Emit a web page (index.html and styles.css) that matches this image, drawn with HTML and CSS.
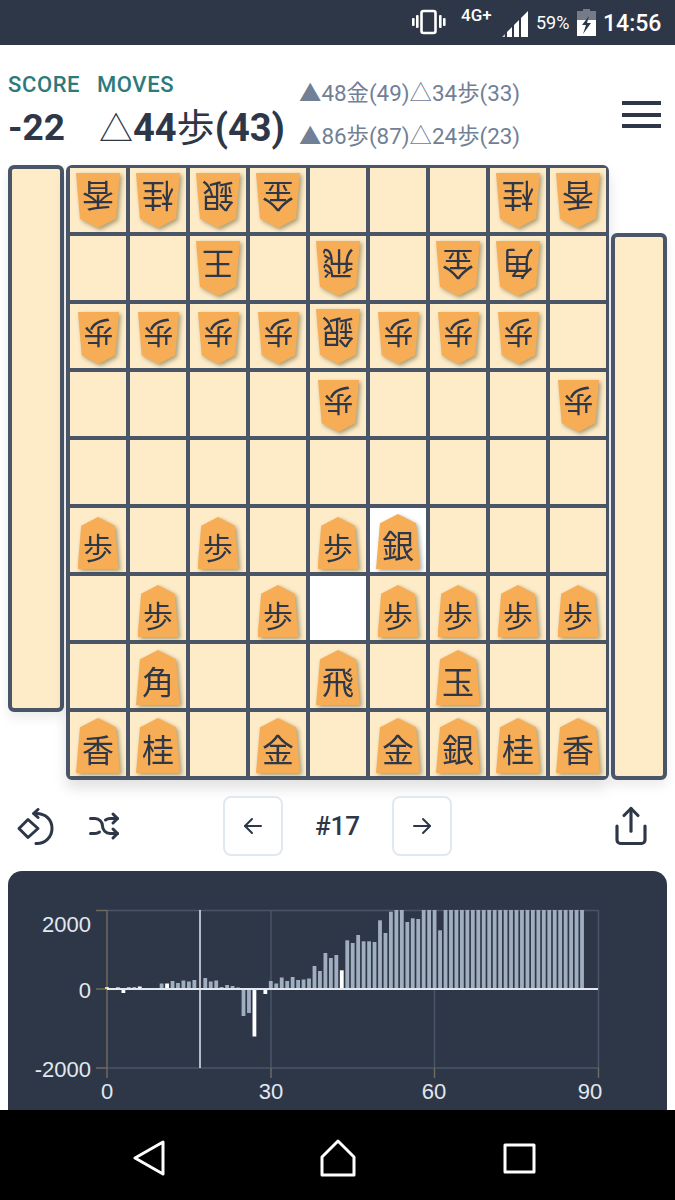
FILE: index.html
```html
<!DOCTYPE html>
<html lang="ja">
<head>
  <meta charset="UTF-8" />
  <meta name="viewport" content="width=device-width, initial-scale=1.0"/>
  <title>Shogi Replay</title>
  <link rel="stylesheet" href="styles.css">
</head>
<body>

<div class="status-bar">
  <svg class="icon-vibrate" width="36" height="26" viewBox="0 0 36 26">
    <rect x="10.5" y="2" width="14" height="22" rx="2" fill="none" stroke="#fff" stroke-width="2.6"/>
    <rect x="5" y="6" width="2.6" height="13" rx="1" fill="#fff"/>
    <rect x="1" y="9" width="2.6" height="8" rx="1" fill="#fff"/>
    <rect x="28" y="6" width="2.6" height="13" rx="1" fill="#fff"/>
    <rect x="32" y="9" width="2.6" height="8" rx="1" fill="#fff"/>
  </svg>
  <span class="net-type">4G+</span>
  <svg class="icon-signal" width="26" height="27" viewBox="0 0 26 27">
    <polygon points="0,27 3,24 3,27" fill="#fff" opacity=".7"/>
    <polygon points="5,27 5,22 10,17 10,27" fill="#fff"/>
    <polygon points="12,27 12,15 17,10 17,27" fill="#fff"/>
    <polygon points="19,27 19,8 26,1 26,27" fill="#fff"/>
  </svg>
  <span class="battery-pct">59%</span>
  <svg class="icon-battery" width="19" height="27" viewBox="0 0 19 27">
    <path d="M6 0h7v2h6v10H0V2h6z" fill="#fff" opacity=".35"/>
    <path d="M0 11h19v16H0z" fill="#fff"/>
    <path d="M12 7 L5 16 H9 L6 25 L14 14 H10 Z" fill="#2d3748"/>
  </svg>
  <span class="clock">14:56</span>
</div>

<header class="game-header">
  <div class="score-box">
    <div class="label">SCORE</div>
    <div class="value">-22</div>
  </div>
  <div class="move-box">
    <div class="label">MOVES</div>
    <div class="value"><span class="side">△</span>44<span class="thin">歩</span>(43)</div>
  </div>
  <div class="next-moves">
    <div>▲48金(49)△34歩(33)</div>
    <div>▲86歩(87)△24歩(23)</div>
  </div>
  <button class="menu-btn" type="button"><span></span><span></span><span></span></button>
</header>

<section class="board-area">
  <div class="stand stand-top"></div>
  <div class="board" id="board"></div>
  <div class="stand stand-bottom"></div>
</section>

<div class="controls">
  <svg class="tool-rotate" width="40" height="40" viewBox="0 0 40 40" fill="none" stroke="#2d3748" stroke-width="3" stroke-linejoin="round" stroke-linecap="round">
    <path d="M12 11.500 L22 20.500 L12 29.500 L3 20.500 Z"/>
    <path d="M19 5.500 C30 5 36 12 36 20.500 C36 29 29 36 20 35.500"/>
    <path d="M22 1.500 L17.500 5.500 L22 9.500"/>
  </svg>
  <svg class="tool-shuffle" width="36" height="36" viewBox="0 0 24 24" fill="none" stroke="#2d3748" stroke-width="2" stroke-linejoin="round" stroke-linecap="round">
    <path d="M18 4l3 3l-3 3"/>
    <path d="M18 20l3 -3l-3 -3"/>
    <path d="M3 7h3a5 5 0 0 1 5 5a5 5 0 0 0 5 5h5"/>
    <path d="M21 7h-5a4.978 4.978 0 0 0 -3 1m-4 8a4.984 4.984 0 0 1 -3 1h-3"/>
  </svg>
  <div class="pager">
    <button class="page-btn" type="button">
      <svg width="24" height="24" viewBox="0 0 24 24" fill="none" stroke="#2d3748" stroke-width="2" stroke-linecap="round" stroke-linejoin="round"><path d="M20 12H4"/><path d="M11 5l-7 7 7 7"/></svg>
    </button>
    <span class="move-no">#17</span>
    <button class="page-btn" type="button">
      <svg width="24" height="24" viewBox="0 0 24 24" fill="none" stroke="#2d3748" stroke-width="2" stroke-linecap="round" stroke-linejoin="round"><path d="M4 12h16"/><path d="M13 5l7 7-7 7"/></svg>
    </button>
  </div>
  <svg class="tool-share" width="42" height="42" viewBox="0 0 24 24" fill="none" stroke="#2d3748" stroke-width="1.800" stroke-linecap="round" stroke-linejoin="round">
    <path d="M4 12v8a2 2 0 0 0 2 2h12a2 2 0 0 0 2-2v-8"/>
    <path d="M8 6l4-4 4 4"/>
    <path d="M12 2v13"/>
  </svg>
</div>

<section class="chart-panel">
  <svg id="chart" width="659" height="239" viewBox="8 871 659 239">
    <g class="grid">
      <path d="M107 910.500H598.500M107 1068H598.500M271 910V1068M434.500 910V1068M598.500 910V1068"/>
    </g>
    <g class="ticks">
      <path d="M107 910V1078M96 910.500H107M96 1068H107M96 989H107"/>
      <path d="M271 1068V1078M434.500 1068V1078M598.500 1068V1078"/>
    </g>
    <g id="bars"></g>
    <path class="zero-line" d="M107 989H598"/>
    <path class="cursor-line" d="M200 910V1068"/>
    <g class="y-labels">
      <text x="91" y="932">2000</text>
      <text x="91" y="998">0</text>
      <text x="91" y="1077">-2000</text>
    </g>
    <g class="x-labels">
      <text x="107" y="1099">0</text>
      <text x="271" y="1099">30</text>
      <text x="434" y="1099">60</text>
      <text x="590" y="1099">90</text>
    </g>
  </svg>
</section>

<nav class="nav-bar">
  <svg width="33" height="36" viewBox="0 0 33 36" fill="none" stroke="#fff" stroke-width="3" stroke-linejoin="round"><path d="M30 2V34L2 18Z"/></svg>
  <svg class="nav-home" width="38" height="38" viewBox="0 0 38 38" fill="none" stroke="#fff" stroke-width="3" stroke-linejoin="round"><path d="M19 2L35 18V36H3V18Z"/></svg>
  <svg class="nav-recent" width="33" height="31" viewBox="0 0 33 31" fill="none" stroke="#fff" stroke-width="3" stroke-linejoin="round"><path d="M2 2H31V29H2Z"/></svg>
</nav>

<script src="script.js"></script>
</body>
</html>
```

FILE: styles.css
```css
* { box-sizing: border-box; margin: 0; padding: 0; }

html, body {
  height: 1200px;
  overflow: hidden;
}

body {
  font-family: Roboto, 'Noto Sans CJK JP', sans-serif;
  background: #fff;
  color: #2d3748;
  display: flex;
  flex-direction: column;
}

/* android status bar */
.status-bar {
  height: 45px;
  flex: none;
  background: #2d3748;
  color: #fff;
  display: flex;
  align-items: flex-start;
  padding-left: 411px;
}

.icon-vibrate { margin-top: 9px; }
.net-type {
  font-size: 17px;
  font-weight: 500;
  line-height: 18px;
  margin: 6px 0 0 14px;
  width: 41px;
}
.icon-signal { margin-top: 10px; }
.battery-pct {
  font-size: 18px;
  line-height: 22px;
  margin: 12px 0 0 8px;
  width: 40px;
}
.icon-battery { margin: 9px 0 0 1px; }
.clock {
  font-size: 23px;
  font-weight: 500;
  line-height: 26px;
  margin: 11px 0 0 7px;
}

/* score and moves */
.game-header {
  height: 120px;
  flex: none;
  display: flex;
  padding: 28px 14px 0 8px;
}

.label {
  font-size: 22px;
  font-weight: 500;
  line-height: 24px;
  color: #2c7a7b;
  letter-spacing: .6px;
}

.value {
  font-size: 37px;
  font-weight: 700;
  line-height: 44px;
  margin-top: 9px;
  white-space: nowrap;
}

.value .thin { font-weight: 400; }

.value .side {
  font-weight: 400;
  font-size: 34px;
  margin-left: 2px;
}

.score-box { width: 89px; }
.move-box { width: 203px; }
.move-box .value { font-size: 38px; }

.next-moves {
  flex: 1;
  margin: -1px 0 0 -1px;
  font-size: 22.4px;
  line-height: 43px;
  color: #718096;
  white-space: nowrap;
}

.menu-btn {
  width: 39px;
  margin-top: 28px;
  height: 27px;
  border: none;
  background: none;
  display: flex;
  flex-direction: column;
  justify-content: space-between;
}

.menu-btn span {
  display: block;
  height: 4px;
  background: #2d3748;
}

/* board */
.board-area {
  height: 615px;
  flex: none;
  display: flex;
  gap: 2px;
  padding-left: 8px;
}

.stand {
  width: 56px;
  height: 547px;
  background: #feebc8;
  border: 4px solid #4a5568;
  border-radius: 6px;
  box-shadow: 0 6px 12px rgba(0, 0, 0, 0.08);
}

.stand-bottom { align-self: flex-end; }

.board {
  width: 543px;
  height: 615px;
  display: grid;
  grid-template-columns: repeat(9, 56px);
  grid-template-rows: repeat(9, 64px);
  gap: 4px;
  background: #4a5568;
  border-style: solid;
  border-color: #4a5568;
  border-width: 3px 3px 4px 4px;
  border-radius: 6px;
  box-shadow: 0 8px 14px rgba(0, 0, 0, 0.12);
}

.cell {
  background: #feebc8;
  display: flex;
  justify-content: center;
  align-items: flex-end;
  padding-bottom: 3px;
}

.cell.flipped {
  align-items: flex-start;
  padding: 5px 0 0;
}

.cell.flipped:has(.small) { padding-top: 8px; }

.cell.last { background: #fff; }

.piece {
  position: relative;
  width: 44px;
  height: 55px;
  font-size: 32px;
  line-height: 1;
  display: flex;
  align-items: center;
  justify-content: center;
  padding-top: 4px;
  font-family: 'Noto Sans CJK JP', sans-serif;
  filter: drop-shadow(2px 2px 2px rgba(60, 60, 20, 0.45));
}

/* the piece outline sits under the character */
.piece::before {
  content: "";
  position: absolute;
  inset: 0;
  z-index: -1;
  background: #f6ad55;
  clip-path: polygon(50% 0, 91% 17%, 100% 100%, 0 100%, 9% 17%);
}

.piece.small {
  width: 41px;
  height: 52px;
  font-size: 30px;
  padding-top: 5px;
}

.cell.flipped .piece {
  transform: rotate(180deg);
  filter: drop-shadow(-2px -2px 2px rgba(60, 60, 20, 0.45));
}

/* tools under the board */
.controls {
  height: 91px;
  flex: none;
  display: flex;
  align-items: flex-start;
  padding: 16px 23px 0 16px;
}

.tool-rotate { margin: 12px 0 0 0; }
.tool-shuffle { margin: 12px 0 0 30px; }

.pager {
  display: flex;
  align-items: center;
  margin-left: 101px;
}

.page-btn {
  width: 60px;
  height: 60px;
  background: #fff;
  border: 2px solid #e2e8f0;
  border-radius: 8px;
  display: flex;
  align-items: center;
  justify-content: center;
}

.move-no {
  width: 109px;
  text-align: center;
  font-size: 26px;
  font-weight: 500;
}

.tool-share { margin: 9px 0 0 auto; }

.chart-panel {
  flex: 1;
  margin: 0 8px;
  background: #2d3748;
  border-radius: 14px 14px 0 0;
  overflow: hidden;
}

#chart { display: block; }

.grid path {
  fill: none;
  stroke: #4a5568;
  stroke-width: 1.5;
}

.ticks path {
  fill: none;
  stroke: #6e6a5e;
  stroke-width: 1.5;
}

.zero-line {
  stroke: #e2e8f0;
  stroke-width: 2;
}

.cursor-line {
  stroke: #e2e8f0;
  stroke-width: 1.5;
}

.y-labels text,
.x-labels text {
  font-family: 'Liberation Sans', sans-serif;
  font-size: 22px;
  fill: #e2e8f0;
}

.y-labels text { text-anchor: end; }
.x-labels text { text-anchor: middle; }

.nav-bar {
  height: 90px;
  flex: none;
  background: #000;
  display: flex;
  align-items: center;
  padding: 6px 0 0 133px;
}

.nav-home { margin-left: 153px; }
.nav-recent { margin-left: 146px; }
```

FILE: script.js
```js
// top row first, "." is an empty square, lower case pieces belong to gote (upside down)
const position = [
  'lnsg...nl',
  '..k.r.gb.',
  'ppppsppp.',
  '....p...p',
  '.........',
  'P.P.PS...',
  '.P.P.PPPP',
  '.B..R.K..',
  'LN.G.GSNL'
];

const names = {
  l: '香', n: '桂', s: '銀', g: '金', k: '王', r: '飛', b: '角', p: '歩',
  L: '香', N: '桂', S: '銀', G: '金', K: '玉', R: '飛', B: '角', P: '歩'
};

const board = document.getElementById('board');

position.forEach((row, y) => {
  [...row].forEach((code, x) => {
    const cell = document.createElement('div');
    cell.className = 'cell';
    if ((y === 5 && x === 5) || (y === 6 && x === 4)) cell.classList.add('last');
    if (code !== '.') {
      const piece = document.createElement('div');
      piece.className = 'piece';
      piece.textContent = names[code];
      if (code === 'p' || code === 'P') piece.classList.add('small');
      if (code === code.toLowerCase()) cell.classList.add('flipped');
      cell.appendChild(piece);
    }
    board.appendChild(cell);
  });
});

// bar heights in px above (or below) the zero line
const evals = [
  2, 0, 2, -4, 2, 2, 2.5, 1, .5, .5, 5.5, 5.5, 8, 6, 8.5, 7.5, 9, 0,
  11, 7.5, 8.5, 2, 4, 3, 1.5, -27, -24, -47.5, 1, -5,
  8, 5.5, 11.5, 8, 12, 9, 9.5, 10.5, 23, 18, 36, 31, 34, 18.7,
  48.7, 46, 54, 47.7, 47.7, 47, 68.7, 56, 77.3, 79, 79, 67, 70.7, 70, 79, 79, 79, 58.7
];
while (evals.length < 88) evals.push(79);

const whiteBars = [3, 6, 11, 27, 29, 43];
const bars = document.getElementById('bars');

evals.forEach((h, i) => {
  const rect = document.createElementNS('http://www.w3.org/2000/svg', 'rect');
  rect.setAttribute('x', 107 + i * 5.46 - 1.9);
  rect.setAttribute('y', h > 0 ? 989 - h : 989);
  rect.setAttribute('width', 3.8);
  rect.setAttribute('height', Math.abs(h));
  rect.setAttribute('fill', i === 0 ? '#f6e05e' : whiteBars.includes(i) ? '#fff' : '#a0aec0');
  bars.appendChild(rect);
});
```
